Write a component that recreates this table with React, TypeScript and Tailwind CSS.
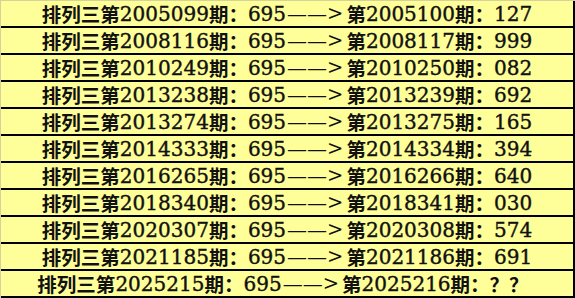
import React from "react";

const rows: [string, string, string, string][] = [
  ["2005099", "695", "2005100", "127"],
  ["2008116", "695", "2008117", "999"],
  ["2010249", "695", "2010250", "082"],
  ["2013238", "695", "2013239", "692"],
  ["2013274", "695", "2013275", "165"],
  ["2014333", "695", "2014334", "394"],
  ["2016265", "695", "2016266", "640"],
  ["2018340", "695", "2018341", "030"],
  ["2020307", "695", "2020308", "574"],
  ["2021185", "695", "2021186", "691"],
  ["2025215", "695", "2025216", "？？"],
];

function Cjk({ children }: { children: React.ReactNode }) {
  return <span className="font-['Noto_Sans_CJK_SC',sans-serif] font-semibold">{children}</span>;
}

function Num({ children }: { children: React.ReactNode }) {
  return (
    <span className="font-['DejaVu_Serif',serif] text-[20px] [-webkit-text-stroke:0.4px_#111]">
      {children}
    </span>
  );
}

export default function App() {
  return (
    <div className="w-[575px] h-[298px] bg-[#ffff99] border-t border-l border-[#d4d49a] flex flex-col overflow-hidden">
      {rows.map((r, i) => {
        const last = i === rows.length - 1;
        return (
          <div
            key={i}
            className={`h-[27px] shrink-0 border-b-2 border-r-2 border-black flex items-center justify-center text-[19.5px] leading-none text-[#111] whitespace-nowrap ${last ? "pr-[8px]" : ""}`}
          >
            <Cjk>排列三第</Cjk>
            <Num>{r[0]}</Num>
            <Cjk>期：</Cjk>
            <Num>{r[1]}</Num>
            <span className="font-['DejaVu_Serif',serif] text-[20px] tracking-[0px] ml-[1px]">——</span>
            <span className="font-['DejaVu_Serif',serif] mr-[3px]">&gt;</span>
            <Cjk>第</Cjk>
            <Num>{r[2]}</Num>
            <Cjk>期：</Cjk>
            {last ? <Cjk>{r[3]}</Cjk> : <Num>{r[3]}</Num>}
          </div>
        );
      })}
    </div>
  );
}
